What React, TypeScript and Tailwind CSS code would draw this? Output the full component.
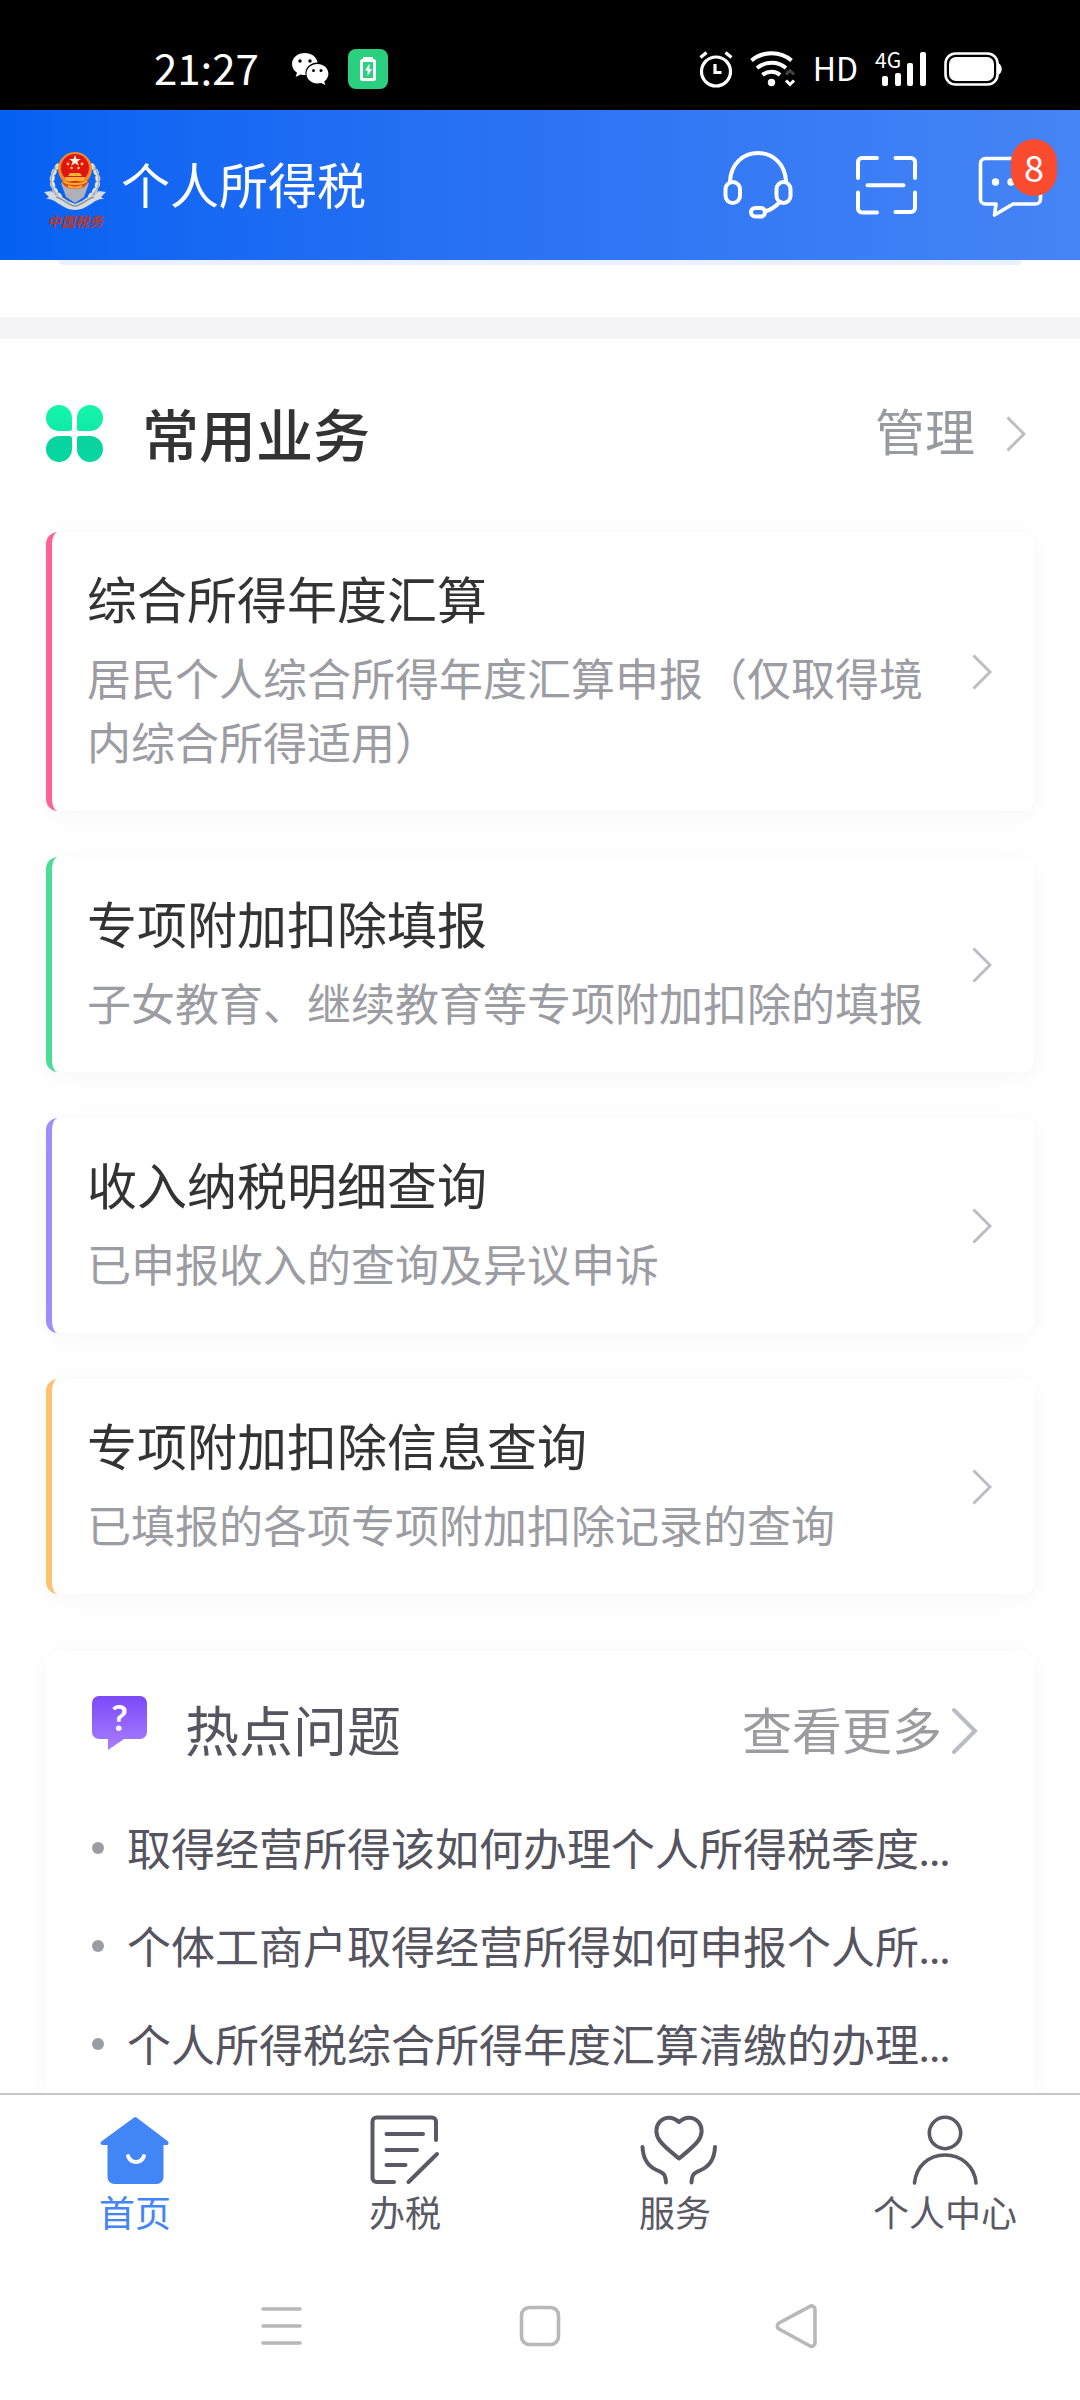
import type { ReactNode } from "react";

const services = [
  {
    title: "综合所得年度汇算",
    desc: "居民个人综合所得年度汇算申报（仅取得境内综合所得适用）",
    border: "border-[#fe6292]",
  },
  {
    title: "专项附加扣除填报",
    desc: "子女教育、继续教育等专项附加扣除的填报",
    border: "border-[#4bdd97]",
  },
  {
    title: "收入纳税明细查询",
    desc: "已申报收入的查询及异议申诉",
    border: "border-[#a08dfb]",
  },
  {
    title: "专项附加扣除信息查询",
    desc: "已填报的各项专项附加扣除记录的查询",
    border: "border-[#fdc26e]",
  },
];

const questions = [
  "取得经营所得该如何办理个人所得税季度",
  "个体工商户取得经营所得如何申报个人所",
  "个人所得税综合所得年度汇算清缴的办理",
];

function WechatIcon() {
  return (
    <svg width="38" height="34" viewBox="0 0 38 34" fill="#fff" aria-hidden="true">
      <path d="M14 1C6.500 1 1 5.800 1 12c0 3.600 1.900 6.700 5 8.700L4.600 25l5-2.600c1.400.4 2.900.6 4.400.6h.6c-1.300-7 4.300-12.400 12-12.600C25.500 4.800 20.300 1 14 1z" />
      <path d="M26.500 12c-6.300 0-11 4.300-11 9.700s4.700 9.700 11 9.700c1.300 0 2.500-.2 3.700-.5l4.200 2.100-1.200-3.600c2.600-1.800 4.200-4.600 4.200-7.700 0-5.400-4.700-9.700-10.900-9.700z" />
      <g fill="#000">
        <circle cx="9" cy="9" r="1.700" />
        <circle cx="19" cy="9" r="1.700" />
        <circle cx="22.500" cy="18.500" r="1.500" />
        <circle cx="30" cy="18.500" r="1.500" />
      </g>
    </svg>
  );
}

function ChargeIcon() {
  return (
    <svg width="40" height="40" viewBox="0 0 40 40" aria-hidden="true">
      <rect width="40" height="40" rx="8" fill="#2bcf80" />
      <path d="M15 8h10v4H15z" fill="#fff" />
      <rect x="13.500" y="11.500" width="13" height="19" rx="1" fill="none" stroke="#fff" strokeWidth="3" />
      <path d="M21.500 14.500l-4.500 7h2.600v5.500l4.400-7h-2.500z" fill="#fff" />
    </svg>
  );
}

function AlarmIcon() {
  return (
    <svg width="34" height="38" viewBox="0 0 34 38" fill="none" stroke="#fff" strokeWidth="3.200" aria-hidden="true">
      <circle cx="17" cy="21.500" r="14.500" />
      <path d="M16 14v8.500h6.500M1.500 7.500l6-5M32.500 7.500l-6-5" />
    </svg>
  );
}

function WifiIcon() {
  return (
    <svg width="46" height="38" viewBox="0 0 46 38" fill="none" stroke="#fff" strokeWidth="4" aria-hidden="true">
      <path d="M1.500 10.500C13 .8 30.500.8 41.500 10.500M7 18c8.500-7 21-7 29 0M12.500 25c5-4.200 13-4.200 17.500 0" />
      <circle cx="21.500" cy="32.500" r="3.700" fill="#fff" stroke="none" />
      <path d="M36 24.500l4-4 4 4" stroke="#444" strokeWidth="3" />
      <path d="M36 30.500l4 4 4-4" strokeWidth="3" />
    </svg>
  );
}

function SignalIcon() {
  return (
    <svg width="52" height="54" viewBox="0 -8 52 54" aria-hidden="true">
      <text x="0" y="18" fontSize="21" fill="#fff" fontFamily="'Noto Sans CJK SC', sans-serif">
        4G
      </text>
      <g fill="#fff">
        <rect x="7" y="26" width="6" height="10" rx="2" />
        <rect x="20" y="23" width="6" height="13" rx="2" />
        <rect x="32" y="13" width="6" height="23" rx="2" />
        <rect x="45" y="2" width="6" height="34" rx="2" />
      </g>
    </svg>
  );
}

function BatteryIcon() {
  return (
    <svg width="58" height="34" viewBox="0 0 58 34" aria-hidden="true">
      <rect x="1.500" y="1.500" width="52" height="31" rx="10" fill="none" stroke="#fff" strokeWidth="2.600" />
      <rect x="5" y="5" width="45" height="24" rx="7" fill="#fff" />
      <path d="M54 11c5 2 5 10 0 12z" fill="#fff" />
    </svg>
  );
}

function EmblemLogo() {
  return (
    <svg width="62" height="96" viewBox="0 -12 62 96" aria-hidden="true">
      <g fill="none" stroke="#e4e0d4" strokeLinecap="round">
        <path d="M14 17C5 27 6 41 19 50M48 17c9 10 8 24-5 33" strokeWidth="5" strokeDasharray="1.500 5" />
        <path d="M12 18C4 28 5 41 18 50M50 18c8 10 7 23-6 32" strokeWidth="1.500" stroke="#a9afb9" />
      </g>
      <path d="M0 43l7-1 5 4c5 1 8 3 12 6l7 3 7-3c4-3 7-5 12-6l5-4 7 1-5 5 3 2c-6 0-9 2-13 5-5 3-10 6-16 6s-11-3-16-6c-4-3-7-5-13-5l3-2z" fill="#d9dadd" />
      <path d="M12 48c6 1 13 9 19 9s13-8 19-9" fill="none" stroke="#8b929c" strokeWidth="1.500" />
      <path d="M17 34l5 14 9 6 9-6 5-14z" fill="#aeb2b8" />
      <circle cx="31" cy="20" r="17" fill="#f08a2c" />
      <circle cx="31" cy="19" r="14" fill="#e0150f" />
      <path d="M31 6l1.600 4h4.200l-3.400 2.600 1.300 4.100L31 14.200l-3.700 2.500 1.300-4.100-3.400-2.600h4.200z" fill="#fff3e0" />
      <g fill="#ffcf66">
        <circle cx="24" cy="15" r="1.400" />
        <circle cx="38" cy="15" r="1.400" />
        <circle cx="27.500" cy="19" r="1.300" />
        <circle cx="34.500" cy="19" r="1.300" />
        <path d="M26 24h10l2 3H24zM21 28h20l-1 4H22z" fill="#f9b233" />
      </g>
      <path d="M17 30c5 4 23 4 28 0-1 7-7 10-14 10s-13-3-14-10z" fill="#e2480f" />
      <path d="M19 32c6 4 18 4 24 0M24 37c4 2 10 2 14 0" fill="none" stroke="#fbb03b" strokeWidth="2" />
      <text x="3" y="78" fontSize="14" fontWeight="700" fontStyle="italic" fill="#b5392f" fontFamily="'Noto Sans CJK SC', sans-serif">
        中国税务
      </text>
    </svg>
  );
}

function HeadsetIcon() {
  return (
    <svg width="80" height="80" viewBox="2 0 80 80" fill="none" stroke="#fff" strokeWidth="4" strokeLinecap="round" aria-hidden="true">
      <path d="M13 36C14 19 26 8 41 8s27 11 28 28" />
      <rect x="8.500" y="37" width="14.500" height="21" rx="7.200" />
      <rect x="59.500" y="37" width="14" height="21" rx="7" />
      <rect x="34" y="63" width="14" height="8.500" rx="4.200" />
      <path d="M49 66c5-1 10-5 14-9" />
    </svg>
  );
}

function ScanIcon() {
  return (
    <svg width="80" height="80" viewBox="-1 0 80 80" fill="none" stroke="#fff" strokeWidth="4" strokeLinecap="round" aria-hidden="true">
      <path d="M31 13H16a4 4 0 0 0-4 4v16M49.500 13H65a4 4 0 0 1 4 4v16M31 67.500H16a4 4 0 0 1-4-4v-16M49.500 67H65a4 4 0 0 0 4-4V47.500M21.500 40.300h36" />
    </svg>
  );
}

function ChatIcon() {
  return (
    <svg width="80" height="80" viewBox="0 0 80 80" fill="none" stroke="#fff" strokeWidth="3.600" strokeLinejoin="round" aria-hidden="true">
      <path d="M14.500 13.500h50a5 5 0 0 1 5 5V54a5 5 0 0 1-5 5H42L23.500 70l1.500-11H14.500a5 5 0 0 1-5-5V18.500a5 5 0 0 1 5-5z" />
      <g fill="#fff" stroke="none">
        <circle cx="24.500" cy="37" r="3.700" />
        <circle cx="40" cy="37" r="3.700" />
        <circle cx="55.500" cy="37" r="3.700" />
      </g>
    </svg>
  );
}

function CloverIcon() {
  return (
    <svg width="58" height="58" viewBox="0 0 58 58" aria-hidden="true">
      <defs>
        <linearGradient id="clover" x1="0" y1="0" x2="0" y2="58" gradientUnits="userSpaceOnUse">
          <stop offset="0" stopColor="#14f6ac" />
          <stop offset="0.450" stopColor="#0fe9a6" />
          <stop offset="0.550" stopColor="#0bd2a0" />
          <stop offset="1" stopColor="#04d8a0" />
        </linearGradient>
      </defs>
      <g fill="url(#clover)">
        <path d="M13 0a13 13 0 0 1 13 13v10.500a2.500 2.500 0 0 1-2.500 2.500H13a13 13 0 0 1 0-26z" />
        <path d="M44 0a13 13 0 0 1 0 26H33.500a2.500 2.500 0 0 1-2.500-2.500V13A13 13 0 0 1 44 0z" />
        <path d="M13 57a13 13 0 0 1 0-26h10.500a2.500 2.500 0 0 1 2.500 2.500V44a13 13 0 0 1-13 13z" />
        <path d="M44 57a13 13 0 0 1-13-13V33.500a2.500 2.500 0 0 1 2.500-2.500H44a13 13 0 0 1 0 26z" />
      </g>
    </svg>
  );
}

function QuestionIcon() {
  return (
    <svg width="55" height="56" viewBox="0 0 55 56" aria-hidden="true">
      <defs>
        <linearGradient id="question" x1="0" y1="0" x2="0" y2="56" gradientUnits="userSpaceOnUse">
          <stop offset="0" stopColor="#7c4af7" />
          <stop offset="1" stopColor="#aa80ff" />
        </linearGradient>
      </defs>
      <path d="M7 0h41a7 7 0 0 1 7 7v29a7 7 0 0 1-7 7H32L16 54V43H7a7 7 0 0 1-7-7V7a7 7 0 0 1 7-7z" fill="url(#question)" />
      <text x="27.500" y="35" textAnchor="middle" fontSize="36" fontWeight="700" fill="#fff" fontFamily="Lato, sans-serif">
        ?
      </text>
    </svg>
  );
}

function Chevron({ large = false }: { large?: boolean }) {
  return large ? (
    <svg width="26" height="48" viewBox="0 0 26 48" fill="none" stroke="#bcbcc4" strokeWidth="4" strokeLinecap="round" aria-hidden="true">
      <path d="M2 3l21 21L2 45" />
    </svg>
  ) : (
    <svg width="20" height="36" viewBox="0 0 20 36" fill="none" stroke="#bcbcc4" strokeWidth="3" aria-hidden="true">
      <path d="M1.500 1.500L18 18 1.500 34.500" />
    </svg>
  );
}

function HomeIcon() {
  return (
    <svg width="76" height="76" viewBox="0 0 76 76" aria-hidden="true">
      <path
        d="M38.300 8L68 30.500l1.500 1.500h-5V66a5 5 0 0 1-5 5h-42a5 5 0 0 1-5-5V32h-7z"
        fill="#4285f6"
        stroke="#4285f6"
        strokeWidth="4"
        strokeLinejoin="round"
      />
      <path d="M31 45c3 8 13 8 16 0" fill="none" stroke="#fff" strokeWidth="4" strokeLinecap="round" />
    </svg>
  );
}

function TaxIcon() {
  return (
    <svg width="76" height="76" viewBox="0 0 76 76" fill="none" stroke="#5a5964" strokeWidth="4" strokeLinecap="round" aria-hidden="true">
      <path d="M69 29V10.500a4 4 0 0 0-4-4H9.500a4 4 0 0 0-4 4V67a4 4 0 0 0 4 4H27M41.500 71L70 43M19.500 23H56M19.500 39H50M19.500 54H38.500" />
    </svg>
  );
}

function ServiceIcon() {
  return (
    <svg width="84" height="76" viewBox="0 0 84 76" fill="none" stroke="#5a5964" strokeWidth="4" strokeLinecap="round" strokeLinejoin="round" aria-hidden="true">
      <path d="M46 11c-7-6.500-15-5-19.500 0-4.500 5.500-4 13 .5 19 4 5.500 11 11 19 17.500C54 41 61 35.500 65 30c4.500-6 5-13.500.5-19C61 6 53 4.500 46 11z" />
      <path d="M9.500 36c.5 12 5.500 19.500 15 23.500 6 2.500 8 3.500 8.500 12M82 36c-.5 12-5.500 19.500-15 23.500-6 2.500-8 3.500-8.500 12" />
    </svg>
  );
}

function PersonIcon() {
  return (
    <svg width="76" height="76" viewBox="0 0 76 76" fill="none" stroke="#5a5964" strokeWidth="3.600" strokeLinecap="round" aria-hidden="true">
      <circle cx="38" cy="22" r="15.700" />
      <path d="M7.500 72C9 55 22 44 38 44s29.500 11 31 28" />
    </svg>
  );
}

const tabs: { label: string; icon: ReactNode; color: string; current?: boolean }[] = [
  { label: "首页", icon: <HomeIcon />, color: "text-[#4285f6]", current: true },
  { label: "办税", icon: <TaxIcon />, color: "text-[#5a5964]" },
  { label: "服务", icon: <ServiceIcon />, color: "text-[#5a5964]" },
  { label: "个人中心", icon: <PersonIcon />, color: "text-[#5a5964]" },
];

export default function App() {
  return (
    <div className="flex min-h-screen flex-col bg-white font-['Noto_Sans_CJK_SC',sans-serif] text-[#333]">
      <div className="flex h-[110px] items-center justify-between bg-black pt-[28px] pr-[78px] pl-[154px] text-white">
        <div className="flex items-center">
          <time className="pb-1 text-[42px] leading-[50px]">21:27</time>
          <span className="ml-8">
            <WechatIcon />
          </span>
          <span className="ml-[19px]">
            <ChargeIcon />
          </span>
        </div>
        <div className="flex items-center gap-[17px]">
          <AlarmIcon />
          <WifiIcon />
          <span className="pb-1 text-[32px] leading-[38px]">HD</span>
          <SignalIcon />
          <BatteryIcon />
        </div>
      </div>

      <header className="flex h-[150px] items-center justify-between bg-linear-to-r from-[#0461f2] to-[#4584f5] pr-[29px] pl-11">
        <div className="flex items-center gap-[15px]">
          <EmblemLogo />
          <h1 className="pb-1 text-[49px] leading-[72px] text-white">个人所得税</h1>
        </div>
        <div className="flex items-center gap-[46px]">
          <button type="button" aria-label="客服">
            <HeadsetIcon />
          </button>
          <button type="button" aria-label="扫一扫">
            <ScanIcon />
          </button>
          <button type="button" aria-label="消息" className="relative">
            <ChatIcon />
            <span className="absolute -top-1.5 -right-1.5 flex h-[57px] w-[46px] items-center justify-center rounded-full bg-[#fb4b2e] pb-1 text-[36px] leading-none text-white">
              8
            </span>
          </button>
        </div>
      </header>

      <main className="flex-1">
        <div className="h-[57px] px-[58px]">
          <div className="h-[5px] rounded-b-[12px] bg-[#eaf1fe]" />
        </div>
        <div className="h-[22px] bg-[#f4f4f8]" />

        <section className="px-[46px] pt-[53px]">
          <div className="flex h-[84px] items-center justify-between">
            <div className="flex items-center gap-[38px]">
              <CloverIcon />
              <h2 className="pb-1 text-[57px] leading-[80px] font-medium">常用业务</h2>
            </div>
            <a href="#manage" className="flex items-center gap-[31px] pr-2 text-[50px] leading-[72px] text-[#9999a0]">
              <span className="pb-2.5">管理</span>
              <Chevron />
            </a>
          </div>

          <ul className="mt-14 flex flex-col gap-[46px]">
            {services.map((s) => (
              <li key={s.title}>
                <a
                  href="#service"
                  className={`flex items-center justify-between gap-11 rounded-[12px] border-l-[6px] bg-white pr-[42px] pl-[35px] shadow-[0_4px_28px_rgba(60,60,110,0.04)] ${s.border}`}
                >
                  <div className="flex flex-1 flex-col gap-3.5 pt-[31px] pb-[38px]">
                    <h3 className="text-[50px] leading-[68px]">{s.title}</h3>
                    <p className="text-[44px] leading-[64px] text-[#9c9ca3]">{s.desc}</p>
                  </div>
                  <Chevron />
                </a>
              </li>
            ))}
          </ul>
        </section>

        <section className="mx-[46px] mt-[57px] rounded-t-[12px] px-[46px] pt-10 text-[#55545f] shadow-[0_4px_28px_rgba(60,60,110,0.04)]">
          <div className="flex h-20 items-center justify-between">
            <div className="flex items-center gap-[38px]">
              <span className="pb-3.5">
                <QuestionIcon />
              </span>
              <h2 className="pb-1 text-[54px] leading-[76px]">热点问题</h2>
            </div>
            <a href="#more" className="flex items-center gap-2.5 pr-2.5 text-[50px] leading-[72px] text-[#9c9ca0]">
              <span className="pb-1.5">查看更多</span>
              <Chevron large />
            </a>
          </div>
          <ul className="mt-7">
            {questions.map((q) => (
              <li key={q} className="flex h-[98px] items-center gap-[23px]">
                <span className="size-3 rounded-full bg-[#9c9ca3]" />
                <a href="#question" className="text-[44px] leading-[64px]">
                  {q}
                  <span className="font-[Lato,sans-serif]">...</span>
                </a>
              </li>
            ))}
          </ul>
        </section>
      </main>

      <footer className="sticky bottom-0 bg-white">
        <nav className="grid grid-cols-4 border-t-2 border-[#c6c6c6] pt-4 pb-[17px]">
          {tabs.map((t) => (
            <a
              key={t.label}
              href="#tab"
              aria-current={t.current ? "page" : undefined}
              className={`flex flex-col items-center text-[36px] leading-[48px] ${t.color}`}
            >
              {t.icon}
              {t.label}
            </a>
          ))}
        </nav>
        <div className="grid h-[148px] grid-cols-3 items-center justify-items-center px-[14%]">
          <button type="button" aria-label="菜单">
            <svg width="48" height="48" viewBox="0 0 48 48" fill="none" stroke="#b8b8b8" strokeWidth="3.600" strokeLinecap="round" aria-hidden="true">
              <path d="M6 7h37M6 24h37M6 41h37" />
            </svg>
          </button>
          <button type="button" aria-label="主屏幕">
            <svg width="48" height="48" viewBox="0 0 48 48" fill="none" stroke="#b8b8b8" strokeWidth="3.600" aria-hidden="true">
              <rect x="5.500" y="5.500" width="37" height="37" rx="8" />
            </svg>
          </button>
          <button type="button" aria-label="返回">
            <svg width="48" height="48" viewBox="0 0 48 48" fill="none" stroke="#b8b8b8" strokeWidth="3.600" aria-hidden="true">
              <path d="M35 4.300l-31 16.700a3.500 3.500 0 0 0 0 6L35 44a3.500 3.500 0 0 0 5-3V7.300a3.500 3.500 0 0 0-5-3z" />
            </svg>
          </button>
        </div>
      </footer>
    </div>
  );
}
